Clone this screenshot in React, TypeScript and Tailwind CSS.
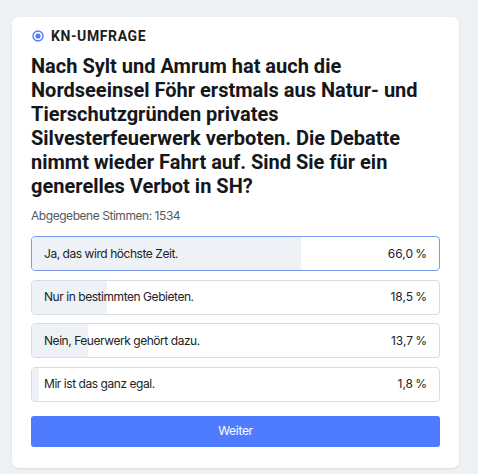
import React from "react";

const options = [
  { label: "Ja, das wird höchste Zeit.", pct: 66.0, text: "66,0\u202F%", selected: true },
  { label: "Nur in bestimmten Gebieten.", pct: 18.5, text: "18,5\u202F%", selected: false },
  { label: "Nein, Feuerwerk gehört dazu.", pct: 13.7, text: "13,7\u202F%", selected: false },
  { label: "Mir ist das ganz egal.", pct: 1.8, text: "1,8\u202F%", selected: false },
];

export default function App() {
  return (
    <div className="bg-white w-[486px] h-[474px]">
      <div className="w-[478px] h-[474px] bg-[#eef1f4] pt-[17px] pl-3">
        <div className="w-[447px] h-[451px] bg-white rounded-[7px] shadow-[0_1px_2px_rgba(0,0,0,0.08)] px-[19px] pt-[11px]">
          <div className="flex items-center gap-[7px] h-[14px] mt-[1px]">
            <svg width="12" height="12" viewBox="0 0 12 12" className="ml-[1px]">
              <circle cx="6" cy="6" r="5" fill="none" stroke="#4f7cff" strokeWidth="1.4" />
              <circle cx="6" cy="6" r="2.6" fill="#4f7cff" />
            </svg>
            <span
              className="text-[14px] font-bold tracking-[0.6px] text-[#1b1d21]"
              style={{ fontFamily: "Roboto, 'Noto Sans', sans-serif" }}
            >
              KN-UMFRAGE
            </span>
          </div>
          <h1
            className="mt-[11px] text-[20px] leading-[24px] font-bold text-[#15171a]"
            style={{ fontFamily: "Roboto, 'Noto Sans', sans-serif" }}
          >
            Nach Sylt und Amrum hat auch die Nordseeinsel Föhr erstmals aus Natur- und
            Tierschutzgründen privates Silvesterfeuerwerk verboten. Die Debatte nimmt
            wieder Fahrt auf. Sind Sie für ein generelles Verbot in SH?
          </h1>
          <div
            className="mt-[10px] text-[12px] leading-[16px] tracking-[-0.45px] text-[#555a60]"
            style={{ fontFamily: "Inter, sans-serif" }}
          >
            Abgegebene Stimmen: 1534
          </div>
          <div className="mt-[12px] flex flex-col gap-[8.5px]" style={{ fontFamily: "Inter, sans-serif" }}>
            {options.map((o) => (
              <div
                key={o.label}
                className={
                  "relative h-[35px] rounded-[4px] border overflow-hidden " +
                  (o.selected ? "border-[#7a99ee]" : "border-[#d6dde5]")
                }
              >
                <div className="absolute left-0 top-0 bottom-0 bg-[#eef1f5]" style={{ width: `${o.pct}%` }} />
                <div className="relative flex items-center justify-between h-full px-[12px] text-[12px] tracking-[-0.45px] text-[#202328]">
                  <span>{o.label}</span>
                  <span>{o.text}</span>
                </div>
              </div>
            ))}
          </div>
          <button
            className="mt-[14px] w-full h-[31px] rounded-[3px] bg-[#4f7cff] text-white text-[12px] tracking-[-0.3px]"
            style={{ fontFamily: "Inter, sans-serif" }}
          >
            Weiter
          </button>
        </div>
      </div>
    </div>
  );
}
